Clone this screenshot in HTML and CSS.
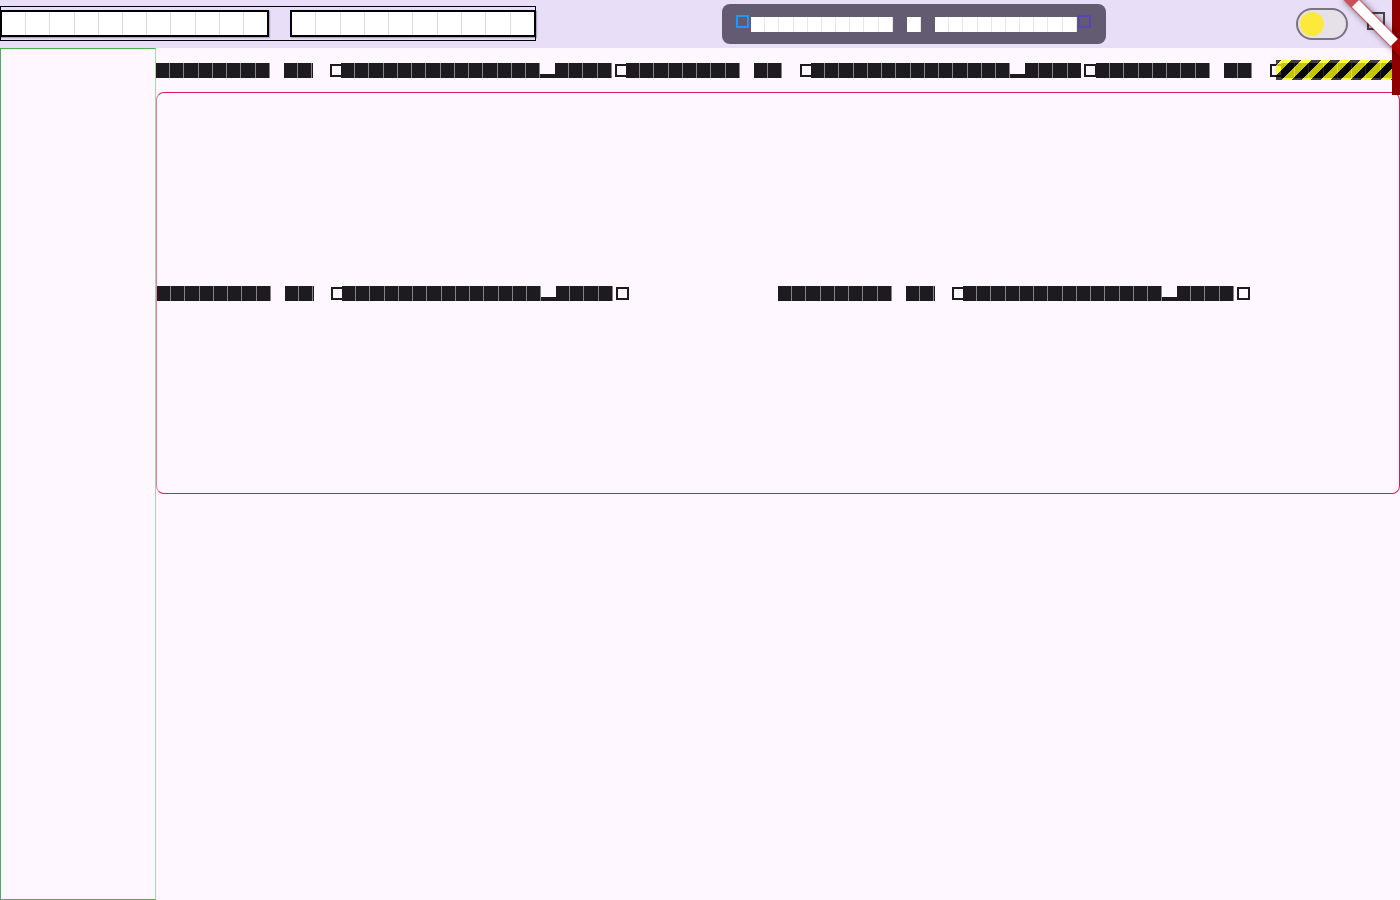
FILE: index.html
```html
<!DOCTYPE html>
<html lang="en">
<head>
<meta charset="utf-8">
<title>App</title>
<link rel="stylesheet" href="styles.css">
</head>
<body>
<div class="app">
  <header class="topbar">
    <div class="search">
      <div class="field f1"></div>
      <div class="field f2"></div>
    </div>
    <div class="pill">
      <span class="sq sq-blue"></span>
      <span class="lt p10 first"></span><span class="psp"></span><span class="lt p1"></span><span class="psp"></span><span class="lt p10"></span>
      <span class="sq sq-purple"></span>
    </div>
    <div class="actions">
      <div class="toggle"><span class="thumb"></span></div>
      <span class="icon"></span>
    </div>
  </header>
  <div class="content">
    <aside class="sidebar"></aside>
    <main class="main">
      <div class="row">
        <div class="line">
          <span class="phrase"><span class="blk c8"></span><span class="sp"></span><span class="blk c2"></span><span class="sp"></span><span class="q"></span><span class="blk c14"></span><span class="us"></span><span class="blk c4"></span><span class="q"></span></span>
          <span class="phrase"><span class="blk c8"></span><span class="sp"></span><span class="blk c2"></span><span class="sp"></span><span class="q"></span><span class="blk c14"></span><span class="us"></span><span class="blk c4"></span><span class="q"></span></span>
          <span class="phrase"><span class="blk c8"></span><span class="sp"></span><span class="blk c2"></span><span class="sp"></span><span class="q"></span><span class="blk c14"></span><span class="us"></span><span class="blk c4"></span><span class="q"></span></span>
        </div>
      </div>
      <div class="hazard"></div>
      <section class="card">
        <div class="half">
          <span class="phrase"><span class="blk c8"></span><span class="sp"></span><span class="blk c2"></span><span class="sp"></span><span class="q"></span><span class="blk c14"></span><span class="us"></span><span class="blk c4"></span><span class="q"></span></span>
        </div>
        <div class="half">
          <span class="phrase"><span class="blk c8"></span><span class="sp"></span><span class="blk c2"></span><span class="sp"></span><span class="q"></span><span class="blk c14"></span><span class="us"></span><span class="blk c4"></span><span class="q"></span></span>
        </div>
      </section>
    </main>
  </div>
  <div class="overflow-label"></div>
  <div class="banner"><div class="ribbon"><span class="ribbon-text"></span></div></div>
</div>
</body>
</html>
```

FILE: styles.css
```css
:root {
  --cw: 14.24px;
  --pw: 14.17px;
  --ink: #1d1b20;
}
* { box-sizing: border-box; }
html, body { margin: 0; padding: 0; }
body {
  width: 1400px;
  height: 900px;
  overflow: hidden;
  background: #fef7ff;
  font-family: "Roboto", "Liberation Sans", sans-serif;
}
.app { position: relative; width: 1400px; height: 900px; overflow: hidden; }

/* ---------- top bar ---------- */
.topbar {
  height: 48px;
  background: #e8def8;
  display: flex;
  align-items: flex-start;
}
.search {
  margin-top: 6px;
  width: 536px;
  height: 35px;
  border: 1px solid #000;
  display: flex;
  align-items: center;
  justify-content: space-between;
}
.field {
  height: 27px;
  border: 2px solid #000;
  box-shadow: 1px 1px 1px rgba(70, 55, 95, 0.35);
}
.f1 {
  width: 269px;
  margin-left: -1px;
  background: repeating-linear-gradient(90deg, #fff 0 23.2px, #dadada 23.2px 24.2px);
}
.f2 {
  width: 246px;
  margin-right: -1px;
  background: repeating-linear-gradient(90deg, #fff 0 23.3px, #dadada 23.3px 24.3px);
}

.pill {
  margin-left: 186px;
  margin-top: 4px;
  width: 384px;
  height: 40px;
  border-radius: 8px;
  background: #625b71;
  display: flex;
  align-items: flex-start;
  padding-left: 14px;
}
.sq {
  display: block;
  width: 13px;
  height: 13px;
  margin-top: 11px;
  border: 2px solid #2196f3;
  flex-shrink: 0;
}
.sq-purple { border-color: #5b45b5; margin-left: 1.4px; }
.lt {
  display: block;
  height: 15px;
  margin-top: 12.7px;
  background: repeating-linear-gradient(90deg, #fff 0 calc(var(--pw) - 1px), #e6e6e6 calc(var(--pw) - 1px) var(--pw));
  flex-shrink: 0;
}
.lt.first { margin-left: 2px; }
.p10 { width: calc(var(--pw) * 10); }
.p1 { width: var(--pw); }
.psp { display: block; width: var(--pw); flex-shrink: 0; }

.actions {
  margin-left: auto;
  display: flex;
  align-items: flex-start;
  padding-right: 15px;
  gap: 19px;
}
.toggle {
  margin-top: 8px;
  width: 52px;
  height: 32px;
  border: 2px solid #79747e;
  border-radius: 16px;
  background: #e6e0e9;
  padding: 2px;
}
.thumb {
  display: block;
  width: 24px;
  height: 24px;
  border-radius: 50%;
  background: #fde93b;
}
.icon {
  display: block;
  margin-top: 12px;
  width: 18px;
  height: 18px;
  border: 2px solid #49454f;
}

/* ---------- content ---------- */
.content { display: flex; height: 852px; }
.sidebar {
  width: 156px;
  flex-shrink: 0;
  border: 1px solid #4caf50;
  border-right-color: #a3d7a5;
}
.main { flex: 1; position: relative; min-width: 0; }
.row {
  height: 44px;
  padding-top: 12px;
  overflow: hidden;
}
.line {
  height: 20px;
  padding-top: 3px;
  display: flex;
}
.phrase { display: flex; flex-shrink: 0; height: 15px; }
.phrase > span { display: block; height: 15px; flex-shrink: 0; }
.blk {
  background: repeating-linear-gradient(90deg, var(--ink) 0 calc(var(--cw) - 1px), #85828a calc(var(--cw) - 1px) var(--cw));
}
.c2 { width: calc(var(--cw) * 2); }
.c4 { width: calc(var(--cw) * 4); }
.c8 { width: calc(var(--cw) * 8); }
.c14 { width: calc(var(--cw) * 14); }
.sp { width: var(--cw); }
.q { width: var(--cw); position: relative; }
.q::before {
  content: "";
  position: absolute;
  left: 3px;
  top: 1px;
  width: 9px;
  height: 9px;
  border: 2px solid var(--ink);
}
.us {
  width: var(--cw);
  background: linear-gradient(to top, var(--ink) 0 4px, transparent 4px);
}

.hazard {
  position: absolute;
  left: 1120px;
  top: 12px;
  width: 116px;
  height: 20px;
  background: repeating-linear-gradient(135deg,
    rgba(0, 0, 0, 0.75) 0 3.54px,
    rgba(255, 255, 0, 0.75) 3.54px 10.61px,
    rgba(0, 0, 0, 0.75) 10.61px 14.14px);
}

.card {
  height: 402px;
  border: 1px solid #e2185f;
  border-left-color: #f07aa3;
  border-radius: 8px;
  display: flex;
  align-items: center;
}
.half { flex: 1; display: flex; }

/* ---------- debug overlays ---------- */
.overflow-label {
  position: absolute;
  right: 0;
  top: 0;
  width: 8px;
  height: 95px;
  background: #8f0000;
}
.banner {
  position: absolute;
  top: 0;
  right: 0;
  width: 0;
  height: 0;
}
.ribbon {
  position: absolute;
  left: -40px;
  top: 28px;
  width: 80px;
  height: 12px;
  transform-origin: 40px -28px;
  transform: rotate(45deg);
  background: rgba(184, 0, 0, 0.63);
  box-shadow: 0 0 6px rgba(0, 0, 0, 0.5);
}
.ribbon-text {
  position: absolute;
  left: 11px;
  top: 1px;
  width: 55px;
  height: 10px;
  background: #fff;
}
```
